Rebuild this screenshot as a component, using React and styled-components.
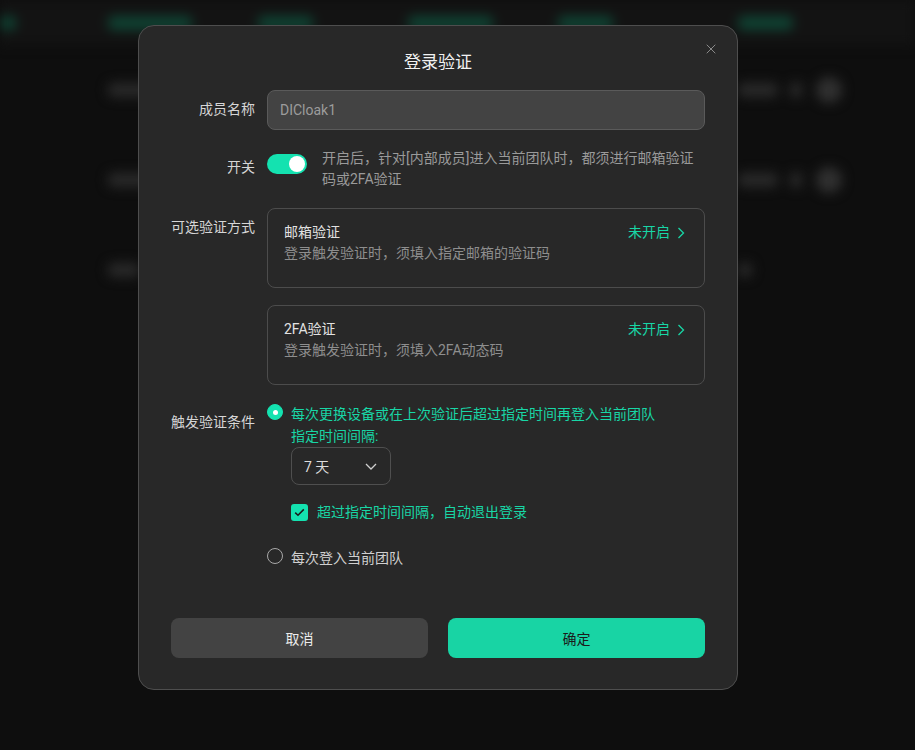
import React from 'react';
import styled, { createGlobalStyle } from 'styled-components';
import { X } from 'lucide-react';

const GREEN = '#18d6a6';

const GlobalStyle = createGlobalStyle`
  html, body {
    margin: 0;
    padding: 0;
    background: #0e0e0e;
    font-family: Roboto, "Noto Sans CJK SC", sans-serif;
  }
  * { box-sizing: border-box; }
`

const Page = styled.div`
  position: relative;
  width: 915px;
  height: 750px;
  overflow: hidden;
  background: #0e0e0e;
`

const Backdrop = styled.div`
  filter: blur(6px);
`

const HeadBar = styled.div`
  display: grid;
  grid-template-columns: 108px 150px 150px 150px 180px 1fr;
  align-items: center;
  height: 45px;
  background: #131313;
`

const ListRow = styled.div`
  display: grid;
  grid-template-columns: 108px 630px 1fr;
  align-items: center;
  height: 90px;
  &:first-of-type { margin-top: 3px; }
`

const Blob = styled.div`
  width: ${(p) => p.w}px;
  height: ${(p) => p.h || 14}px;
  border-radius: ${(p) => (p.round ? '50%' : '5px')};
  background: ${(p) => p.color || '#2a2a2a'};
  margin-left: ${(p) => p.ml || 0}px;
`

const Cluster = styled.div`
  display: flex;
  align-items: center;
`

const Modal = styled.div`
  position: absolute;
  top: 25px;
  left: 138px;
  width: 600px;
  height: 665px;
  background: #282828;
  border: 1px solid #4e4e4e;
  border-radius: 16px;
  padding: 24px 32px 32px;
  color: #d4d4d4;
  font-size: 14px;
`

const Title = styled.h2`
  margin: 0 0 16px;
  text-align: center;
  font-size: 17px;
  line-height: 24px;
  font-weight: 400;
  color: #f2f2f2;
`

const CloseBtn = styled.button`
  position: absolute;
  top: 14px;
  right: 17px;
  width: 18px;
  height: 18px;
  padding: 0;
  border: none;
  background: none;
  color: #9a9a9a;
  display: flex;
  align-items: center;
  justify-content: center;
`

const Form = styled.div`
  display: flex;
  flex-direction: column;
  gap: 18px;
`

const Row = styled.div`
  display: grid;
  grid-template-columns: 84px 1fr;
  column-gap: 12px;
  align-items: start;
`

const Label = styled.div`
  text-align: right;
  line-height: 22px;
  padding-top: ${(p) => p.pt || 8}px;
  color: #d6d6d6;
  white-space: nowrap;
`

const Input = styled.div`
  height: 40px;
  background: #434343;
  border: 1px solid #5a5a5a;
  border-radius: 8px;
  padding: 0 12px;
  display: flex;
  align-items: center;
  color: #9c9c9c;
`

const SwitchLine = styled.div`
  display: flex;
  align-items: flex-start;
  gap: 15px;
`

const Toggle = styled.div`
  flex: none;
  width: 40px;
  height: 20px;
  margin-top: 6px;
  border-radius: 10px;
  background: #14e2b0;
  display: flex;
  align-items: center;
  justify-content: flex-end;
  padding: 2px;
  &::after {
    content: '';
    width: 16px;
    height: 16px;
    border-radius: 50%;
    background: #fff;
  }
`

const Hint = styled.div`
  color: #9a9a9a;
  line-height: 21px;
`

const Cards = styled.div`
  display: flex;
  flex-direction: column;
  gap: 17px;
`

const Card = styled.div`
  height: 80px;
  border: 1px solid #4c4c4c;
  border-radius: 8px;
  padding: 13px 19px 0 16px;
  display: grid;
  grid-template-columns: 1fr auto;
  align-content: start;
  line-height: 21px;
`

const CardTitle = styled.div`
  color: #e2e2e2;
`

const CardDesc = styled.div`
  grid-column: 1 / -1;
  color: #8e8e8e;
`

const Status = styled.div`
  display: flex;
  align-items: center;
  gap: 7px;
  color: ${GREEN};
`

const Options = styled.div`
  display: flex;
  flex-direction: column;
`

const Option = styled.div`
  display: flex;
  align-items: flex-start;
  gap: 8px;
  line-height: 22px;
  color: ${(p) => (p.active ? GREEN : '#d0d0d0')};
  margin-top: ${(p) => p.mt || 0}px;
`

const Radio = styled.span`
  flex: none;
  width: 16px;
  height: 16px;
  margin-top: 1px;
  border-radius: 50%;
  border: 1px solid ${(p) => (p.checked ? '#14e2b0' : '#a8a8a8')};
  background: ${(p) => (p.checked ? '#14e2b0' : 'transparent')};
  display: flex;
  align-items: center;
  justify-content: center;
  &::after {
    content: '';
    width: 5px;
    height: 5px;
    border-radius: 50%;
    background: ${(p) => (p.checked ? '#fff' : 'transparent')};
  }
`

const SubBlock = styled.div`
  padding-left: 24px;
  display: flex;
  flex-direction: column;
  align-items: flex-start;
`

const Select = styled.div`
  width: 100px;
  height: 38px;
  border: 1px solid #4f4f4f;
  border-radius: 8px;
  padding: 0 13px 0 12px;
  display: flex;
  align-items: center;
  justify-content: space-between;
  color: #dcdcdc;
`

const CheckRow = styled.div`
  display: flex;
  align-items: center;
  gap: 9px;
  margin-top: 16px;
  line-height: 22px;
  color: ${GREEN};
`

const CheckBox = styled.span`
  flex: none;
  width: 17px;
  height: 17px;
  border-radius: 3px;
  background: #14e2b0;
  display: flex;
  align-items: center;
  justify-content: center;
`

const Footer = styled.div`
  display: grid;
  grid-template-columns: 1fr 1fr;
  gap: 20px;
  margin-top: 49px;
`

const Button = styled.button`
  height: 40px;
  border: none;
  border-radius: 8px;
  font-family: inherit;
  font-size: 14px;
  background: ${(p) => (p.primary ? '#18d4a4' : '#434343')};
  color: ${(p) => (p.primary ? '#1b1b1b' : '#ececec')};
`

const Chevron = ({ dir = 'right', color }) =>
  dir === 'right' ? (
    <svg width="8" height="12" viewBox="0 0 8 12" fill="none">
      <path d="M1.5 1 L6.5 6 L1.5 11" stroke={color} strokeWidth="1.3" />
    </svg>
  ) : (
    <svg width="12" height="7" viewBox="0 0 12 7" fill="none">
      <path d="M1 1 L6 6 L11 1" stroke={color} strokeWidth="1.3" />
    </svg>
  )

const MethodCard = ({ title, desc }) => (
  <Card>
    <CardTitle>{title}</CardTitle>
    <Status>
      未开启
      <Chevron color={GREEN} />
    </Status>
    <CardDesc>{desc}</CardDesc>
  </Card>
)

const BgRow = ({ short }) => (
  <ListRow>
    <span />
    <Blob w={short ? 32 : 42} />
    {short ? (
      <Blob w={14} />
    ) : (
      <Cluster>
        <Blob w={40} />
        <Blob w={12} h={16} ml={12} />
        <Blob w={26} h={26} round ml={14} color="#303030" />
      </Cluster>
    )}
  </ListRow>
)

const App = () => {
  return (
    <Page>
      <GlobalStyle />
      <Backdrop>
        <HeadBar>
          <Blob w={16} color="#0f4333" />
          <Blob w={84} color="#0f4333" />
          <Blob w={55} color="#0f4333" />
          <Blob w={85} color="#0f4333" />
          <Blob w={55} color="#0f4333" />
          <Blob w={55} color="#0f4333" />
        </HeadBar>
        <BgRow />
        <BgRow />
        <BgRow short />
      </Backdrop>

      <Modal>
        <CloseBtn>
          <X size={16} strokeWidth={1.3} />
        </CloseBtn>
        <Title>登录验证</Title>
        <Form>
          <Row>
            <Label>成员名称</Label>
            <Input>DICloak1</Input>
          </Row>
          <Row>
            <Label pt={8}>开关</Label>
            <SwitchLine>
              <Toggle />
              <Hint>开启后，针对[内部成员]进入当前团队时，都须进行邮箱验证码或2FA验证</Hint>
            </SwitchLine>
          </Row>
          <Row>
            <Label>可选验证方式</Label>
            <Cards>
              <MethodCard title="邮箱验证" desc="登录触发验证时，须填入指定邮箱的验证码" />
              <MethodCard title="2FA验证" desc="登录触发验证时，须填入2FA动态码" />
            </Cards>
          </Row>
          <Row>
            <Label>触发验证条件</Label>
            <Options>
              <Option active>
                <Radio checked />
                <span>每次更换设备或在上次验证后超过指定时间再登入当前团队</span>
              </Option>
              <SubBlock>
                <Option active>指定时间间隔:</Option>
                <Select>
                  <span>7 天</span>
                  <Chevron dir="down" color="#cfcfcf" />
                </Select>
                <CheckRow>
                  <CheckBox>
                    <svg width="11" height="9" viewBox="0 0 11 9" fill="none">
                      <path d="M1.2 4.6 L4 7.3 L9.8 1.4" stroke="#1a1a1a" strokeWidth="1.5" />
                    </svg>
                  </CheckBox>
                  超过指定时间间隔，自动退出登录
                </CheckRow>
              </SubBlock>
              <Option mt={24}>
                <Radio />
                <span>每次登入当前团队</span>
              </Option>
            </Options>
          </Row>
        </Form>
        <Footer>
          <Button>取消</Button>
          <Button primary>确定</Button>
        </Footer>
      </Modal>
    </Page>
  );
};

export default App;
